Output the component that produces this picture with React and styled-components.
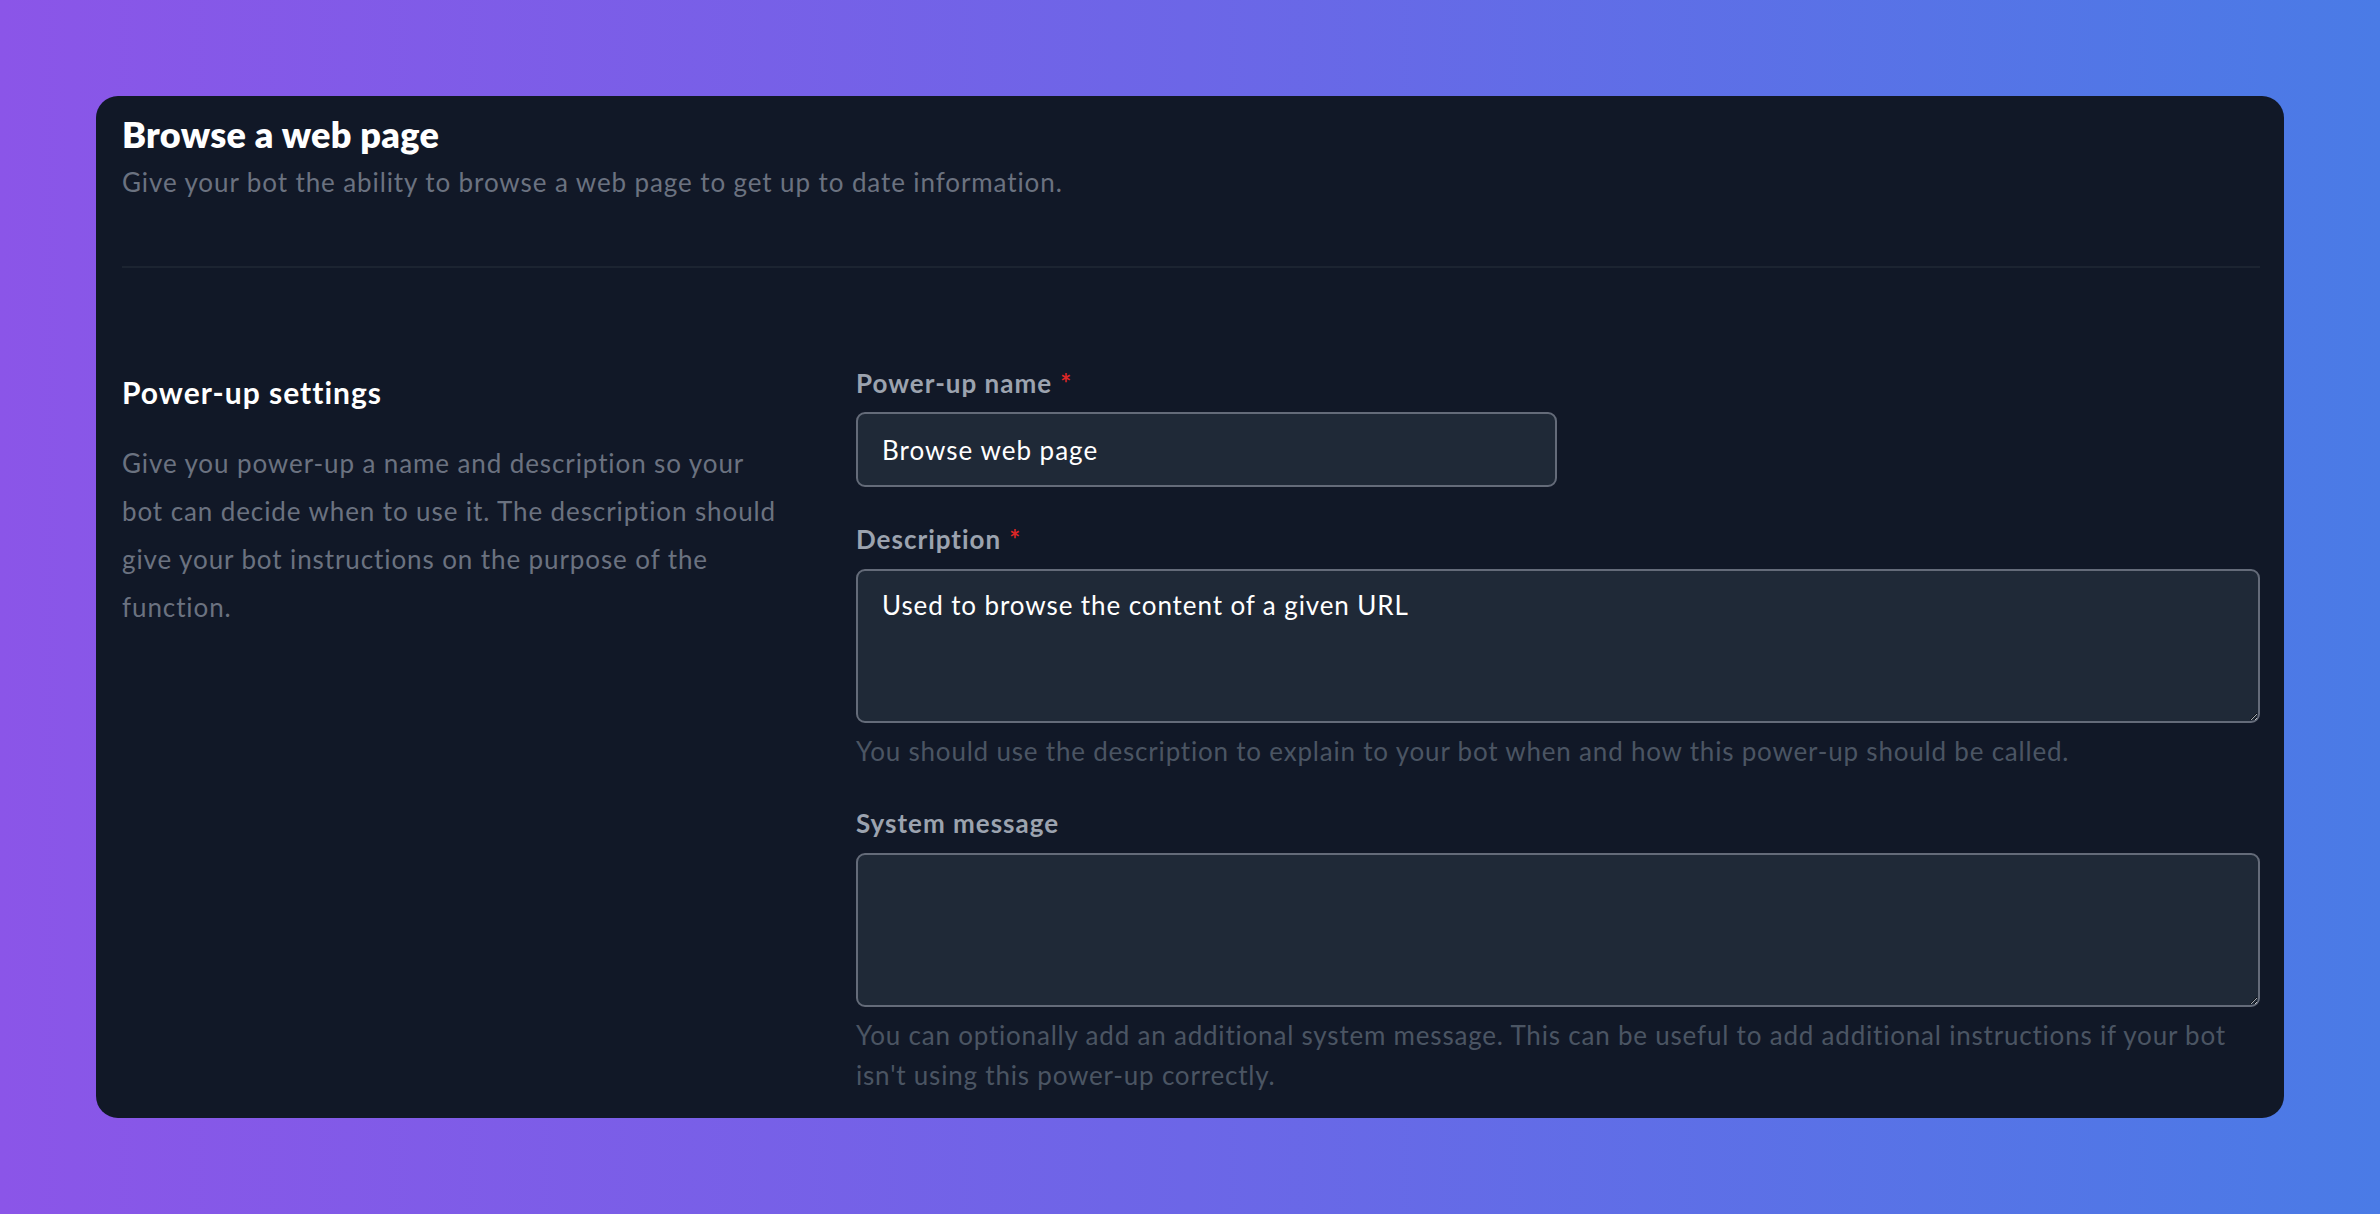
import React from "react";
import styled, { createGlobalStyle } from "styled-components";

const GlobalStyle = createGlobalStyle`
  html, body {
    margin: 0;
    padding: 0;
  }
  body {
    font-family: "Lato", "Noto Sans", sans-serif;
    -webkit-font-smoothing: antialiased;
  }
  * {
    box-sizing: border-box;
  }
`;

const Page = styled.div`
  min-height: 100vh;
  padding: 96px;
  background: linear-gradient(90deg, #8b55e8 0%, #6c66e7 50%, #4a7be6 100%);
`;

const Card = styled.div`
  background: #111827;
  border-radius: 22px;
  padding: 14px 24px 23px 26px;
`;

const Header = styled.div`
  padding-bottom: 66px;
  border-bottom: 2px solid #1c2431;
`;

const Title = styled.h1`
  margin: 0;
  font-size: 36px;
  line-height: 48px;
  font-weight: 800;
  letter-spacing: 0.3px;
  color: #ffffff;
`;

const Subtitle = styled.p`
  margin: 6px 0 0;
  font-size: 26px;
  line-height: 36px;
  letter-spacing: 0.9px;
  color: #6b7280;
`;

const Section = styled.div`
  display: grid;
  grid-template-columns: 670px 1fr;
  column-gap: 64px;
  padding-top: 96px;
`;

const Aside = styled.div`
  padding-top: 7px;
`;

const SectionTitle = styled.h2`
  margin: 0;
  font-size: 30px;
  line-height: 42px;
  font-weight: 700;
  letter-spacing: 1px;
  color: #ffffff;
`;

const SectionText = styled.p`
  margin: 26px 0 0;
  font-size: 26px;
  line-height: 48px;
  letter-spacing: 0.9px;
  color: #6b7280;
`;

const Fields = styled.div`
  display: flex;
  flex-direction: column;
  gap: 34px;
  padding-top: 1px;
`;

const Field = styled.div`
  display: flex;
  flex-direction: column;
`;

const Label = styled.label`
  font-size: 26px;
  line-height: 36px;
  font-weight: 700;
  letter-spacing: 1px;
  color: #9ca3af;
`;

const Required = styled.span`
  color: #dc2626;
  margin-left: 8px;
`;

const Input = styled.input`
  margin-top: 11px;
  width: ${(p) => p.$width || "100%"};
  height: 75px;
  padding: 0 24px;
  border: 2px solid #646b79;
  border-radius: 9px;
  background: #1f2937;
  color: #ffffff;
  font-family: inherit;
  font-size: 26px;
  letter-spacing: 1px;
  outline: none;
`;

const TextArea = styled.textarea`
  margin-top: 12px;
  width: 100%;
  height: 154px;
  padding: 16px 24px 12px;
  border: 2px solid #646b79;
  border-radius: 9px;
  background: #1f2937;
  color: #ffffff;
  font-family: inherit;
  font-size: 26px;
  line-height: 36px;
  letter-spacing: 0.9px;
  resize: vertical;
  outline: none;
`;

const Help = styled.p`
  margin: 8px 0 0;
  font-size: 26px;
  line-height: 40px;
  letter-spacing: 0.8px;
  color: #4b5563;
`;

export default function App() {
  return (
    <>
      <GlobalStyle />
      <Page>
        <Card>
          <Header>
            <Title>Browse a web page</Title>
            <Subtitle>
              Give your bot the ability to browse a web page to get up to date
              information.
            </Subtitle>
          </Header>
          <Section>
            <Aside>
              <SectionTitle>Power-up settings</SectionTitle>
              <SectionText>
                Give you power-up a name and description so your bot can decide
                when to use it. The description should give your bot
                instructions on the purpose of the function.
              </SectionText>
            </Aside>
            <Fields>
              <Field>
                <Label htmlFor="name">
                  Power-up name<Required>*</Required>
                </Label>
                <Input id="name" $width="701px" defaultValue="Browse web page" />
              </Field>
              <Field>
                <Label htmlFor="description">
                  Description<Required>*</Required>
                </Label>
                <TextArea
                  id="description"
                  defaultValue="Used to browse the content of a given URL"
                />
                <Help>
                  You should use the description to explain to your bot when and
                  how this power-up should be called.
                </Help>
              </Field>
              <Field>
                <Label htmlFor="system">System message</Label>
                <TextArea id="system" defaultValue="" />
                <Help>
                  You can optionally add an additional system message. This can
                  be useful to add additional instructions if your bot isn't
                  using this power-up correctly.
                </Help>
              </Field>
            </Fields>
          </Section>
        </Card>
      </Page>
    </>
  );
}
